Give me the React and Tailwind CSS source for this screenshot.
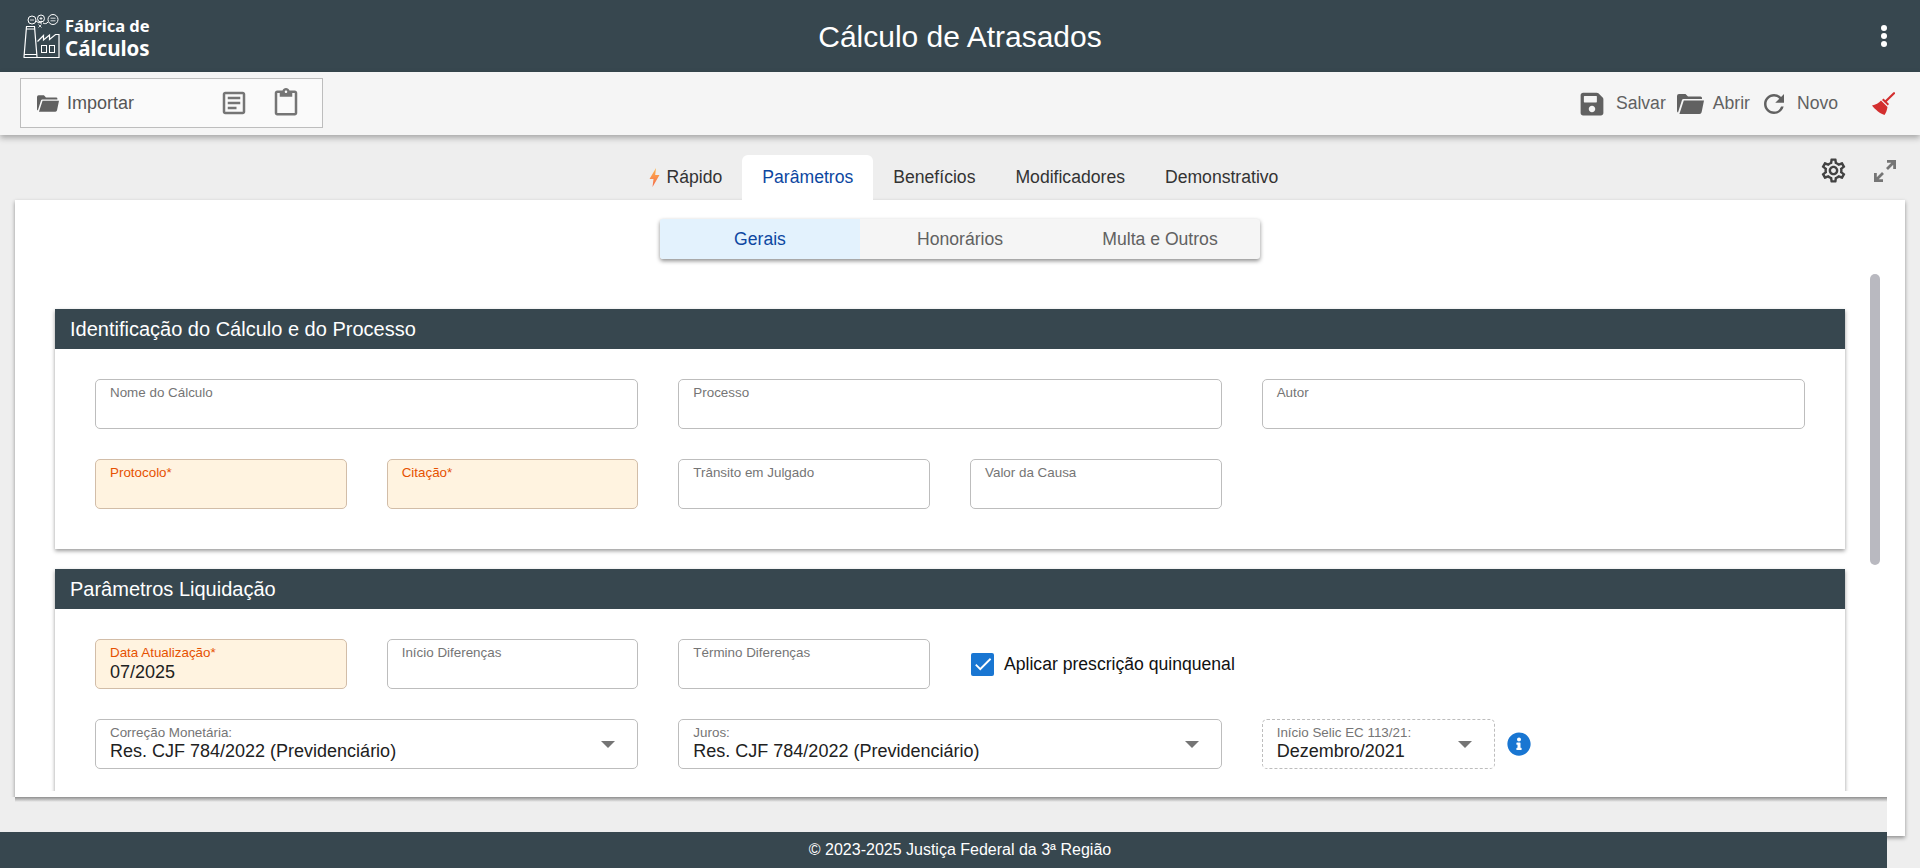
import React from 'react'
import { FaSave, FaInfoCircle } from 'react-icons/fa'
import { MdRefresh, MdOutlineArticle, MdOutlineContentPaste, MdCheck, MdOutlineSettings } from 'react-icons/md'

const FONT = "font-['Liberation_Sans',Arial,sans-serif]"

function Logo() {
  return (
    <div className="flex items-center pl-[23px]">
      <svg viewBox="0 0 37 45" className="w-[37px] h-[45px] text-white" fill="none" stroke="currentColor" strokeWidth="1">
        {/* formula chain */}
        <circle cx="9" cy="6" r="4" />
        <circle cx="18" cy="4.5" r="3.5" />
        <circle cx="30" cy="5.5" r="5" />
        <path d="M13 7l3 2 3 -2M18 8v2M20 9a3.5 3.5 0 0 0 5-1" />
        <path d="M27.5 4.2h5M27.5 6.8h5M16.5 4.5h3M18 3v3M7 6h4" strokeWidth="0.8" />
        <path d="M15.5 10.5l3 3M18.5 10.5l-3 3" strokeWidth="0.8" />
        {/* chimney */}
        <path d="M3 12.5h9M3 15h9" />
        <path d="M3.5 12.5L1 43M11.5 12.5L14 43" strokeWidth="1.2" />
        <path d="M0.5 43.5h36M1 40.5h13" strokeWidth="1.2" />
        {/* factory */}
        <path d="M14.5 27.5l6 -6v4.5l6 -5v4.5l6 -5h3.5v23" strokeWidth="1.2" />
        <rect x="18.5" y="31.5" width="5" height="7" />
        <rect x="26.5" y="31.5" width="5" height="7" />
      </svg>
      <div className="ml-[5px] font-['Noto_Sans',sans-serif] font-bold text-white flex flex-col">
        <span className="text-[16.5px] leading-[22px] mt-[1px]">Fábrica de</span>
        <span className="text-[20.5px] leading-[22px]">Cálculos</span>
      </div>
    </div>
  )
}

function FolderIcon({ className = '' }) {
  return (
    <svg viewBox="0 0 27 20" fill="currentColor" className={className}>
      <path d="M0 2a2 2 0 0 1 2-2h6.5L11 2.5h12.5A1.5 1.5 0 0 1 25 4v1H6.5a1.6 1.6 0 0 0-1.5 1.1L1 18.5A2 2 0 0 1 0 17Z" />
      <path d="M6.8 6.5H27L24.6 18.2a2.2 2.2 0 0 1-2.1 1.8H2.4Z" />
    </svg>
  )
}

function BroomIcon() {
  return (
    <svg viewBox="0 0 23 23" className="w-[23px] h-[23px] text-[#d32f2f]" fill="currentColor">
      <path d="M22 1.2L13.5 9.5" fill="none" stroke="currentColor" strokeWidth="2.2" strokeLinecap="round" />
      <path d="M11.5 6.5L17 12L15.8 13.6L10 8Z" />
      <path d="M9 8.5L15.5 15C15 18 14 21 12.5 23C8 21.5 3 17.5 0 13.5C3.5 13 7 11 9 8.5Z" />
    </svg>
  )
}

function ExpandIcon() {
  return (
    <svg viewBox="0 0 24 24" className="w-[24px] h-[24px] text-[#757575]" fill="none" stroke="currentColor" strokeWidth="2.8">
      <path d="M14 2.4H21.6V10M21 3L14 10" />
      <path d="M10 21.6H2.4V14M3 21L10 14" />
    </svg>
  )
}

function Bolt() {
  return (
    <svg viewBox="0 0 11 19" className="w-[11px] h-[19px] mr-[7px]">
      <defs>
        <linearGradient id="boltFill" x1="0" y1="0" x2="0" y2="1">
          <stop offset="0" stopColor="#ffb74d" />
          <stop offset="1" stopColor="#f4694b" />
        </linearGradient>
      </defs>
      <path d="M7 0L0.5 11H4.5L3.5 19L10.5 7H6.2Z" fill="url(#boltFill)" />
    </svg>
  )
}

function Field({ label, value, required, className = '' }) {
  return (
    <div
      className={`h-[50px] rounded-[5px] border px-[14px] pt-[5px] ${
        required ? 'bg-[#fff3e0] border-[#d2bda8]' : 'bg-white border-[#bdbdbd]'
      } ${className}`}
    >
      <div className={`text-[13.4px] leading-[16px] ${required ? 'text-[#e65100]' : 'text-[#757575]'}`}>{label}</div>
      {value && <div className="text-[18px] leading-[22px] text-[#212121]">{value}</div>}
    </div>
  )
}

function SelectField({ label, value, dashed, className = '' }) {
  return (
    <div
      className={`h-[50px] rounded-[5px] border border-[#bdbdbd] bg-white pl-[14px] pr-[22px] pt-[5px] flex items-center justify-between ${
        dashed ? 'border-dashed' : ''
      } ${className}`}
    >
      <div className="-mt-[5px]">
        <div className="text-[13.4px] leading-[14px] text-[#757575]">{label}</div>
        <div className="text-[18px] leading-[22px] text-[#212121]">{value}</div>
      </div>
      <div className="w-0 h-0 -mt-[5px] border-x-[7px] border-x-transparent border-t-[7px] border-t-[#757575]" />
    </div>
  )
}

function Section({ title, children }) {
  return (
    <section className="w-[1790px] bg-white shadow-[0_2px_4px_rgba(0,0,0,0.4)]">
      <h2 className="h-[40px] bg-[#37474f] pl-[15px] text-[20px] leading-[40px] text-white">{title}</h2>
      <div className="grid grid-cols-6 gap-x-[40px] gap-y-[30px] px-[40px] pt-[30px] pb-[40px]">{children}</div>
    </section>
  )
}

export default function App() {
  return (
    <div className={`relative h-[868px] w-[1920px] overflow-hidden bg-[#eeeeee] ${FONT}`}>
      {/* Header */}
      <header className="relative h-[72px] bg-[#37474f] flex items-center">
        <Logo />
        <h1 className="absolute left-0 right-0 text-center text-[30px] text-white">Cálculo de Atrasados</h1>
        <div className="ml-auto mr-[33px] flex flex-col gap-[2px]">
          <span className="w-[6px] h-[6px] rounded-full bg-white" />
          <span className="w-[6px] h-[6px] rounded-full bg-white" />
          <span className="w-[6px] h-[6px] rounded-full bg-white" />
        </div>
      </header>

      {/* Toolbar */}
      <div className="relative z-10 h-[63px] bg-[#f5f5f5] shadow-[0_3px_6px_rgba(0,0,0,0.3)] flex items-center justify-between pl-[20px] pr-[25px]">
        <div className="self-start mt-[6px] h-[50px] w-[303px] border border-[#bdbdbd] bg-[#fafafa] flex items-center pl-[16px] text-[#616161]">
          <FolderIcon className="w-[22px] h-[17px]" />
          <span className="ml-[8px] text-[18px] text-[#555555]">Importar</span>
          <MdOutlineArticle size={30} className="ml-[85px] text-[#757575]" />
          <MdOutlineContentPaste size={30} className="ml-[22px] text-[#757575]" />
        </div>
        <div className="flex items-center text-[#616161] text-[17.6px]">
          <FaSave size={26} />
          <span className="ml-[11px]">Salvar</span>
          <FolderIcon className="ml-[11px] w-[27px] h-[20px]" />
          <span className="ml-[9px]">Abrir</span>
          <MdRefresh size={30} className="ml-[9px]" />
          <span className="ml-[8px]">Novo</span>
          <span className="ml-[34px]">
            <BroomIcon />
          </span>
        </div>
      </div>

      {/* Tabs */}
      <div className="h-[65px] grid grid-cols-[1fr_auto_1fr] items-end pl-[7px]">
        <div />
        <nav className="flex text-[17.6px] text-[#333333] h-[45px]">
          <div className="px-[20px] flex items-center">
            <Bolt />
            Rápido
          </div>
          <div className="px-[20px] flex items-center bg-white rounded-t-[6px] text-[#0d47a1]">Parâmetros</div>
          <div className="px-[20px] flex items-center">Benefícios</div>
          <div className="px-[20px] flex items-center">Modificadores</div>
          <div className="px-[20px] flex items-center">Demonstrativo</div>
        </nav>
        <div className="flex justify-end items-center gap-[25px] pr-[23px] pb-[15px]">
          <MdOutlineSettings size={29} className="text-[#424242]" />
          <ExpandIcon />
        </div>
      </div>

      {/* Card */}
      <main className="ml-[15px] w-[1890px] h-[636px] bg-white shadow-[0_2px_4px_rgba(0,0,0,0.4)] pt-[19px]">
        <div className="ml-[645px] w-[600px] h-[40px] flex bg-[#f5f5f5] rounded-[3px] shadow-[0_2px_4px_rgba(0,0,0,0.45)] text-[17.6px] text-[#616161]">
          <div className="w-[200px] flex items-center justify-center bg-[#e3f2fd] text-[#0d47a1] rounded-l-[3px]">Gerais</div>
          <div className="w-[200px] flex items-center justify-center">Honorários</div>
          <div className="w-[200px] flex items-center justify-center">Multa e Outros</div>
        </div>

        <div className="mt-[15px] h-[517px] flex">
          <div className="w-[1840px] h-full overflow-hidden pl-[40px] pt-[35px] flex flex-col gap-[20px]">
            <Section title="Identificação do Cálculo e do Processo">
              <Field label="Nome do Cálculo" className="col-span-2" />
              <Field label="Processo" className="col-span-2" />
              <Field label="Autor" className="col-span-2" />
              <Field label="Protocolo*" required />
              <Field label="Citação*" required />
              <Field label="Trânsito em Julgado" />
              <Field label="Valor da Causa" />
            </Section>
            <Section title="Parâmetros Liquidação">
              <Field label="Data Atualização*" value="07/2025" required />
              <Field label="Início Diferenças" />
              <Field label="Término Diferenças" />
              <label className="col-span-3 pl-[1px] flex items-center gap-[10px] text-[17.6px] text-[#111111]">
                <span className="w-[23px] h-[23px] rounded-[2px] bg-[#1976d2] flex items-center justify-center">
                  <MdCheck size={22} className="text-white" />
                </span>
                Aplicar prescrição quinquenal
              </label>
              <SelectField label="Correção Monetária:" value="Res. CJF 784/2022 (Previdenciário)" className="col-span-2" />
              <SelectField label="Juros:" value="Res. CJF 784/2022 (Previdenciário)" className="col-span-2" />
              <div className="col-span-2 flex items-center gap-[12px]">
                <SelectField label="Início Selic EC 113/21:" value="Dezembro/2021" dashed className="w-[233px]" />
                <FaInfoCircle size={24} className="text-[#1976d2]" />
              </div>
            </Section>
          </div>
          <div className="ml-[15px] w-[10px] h-[291px] rounded-full bg-[#b9b9c0]" />
        </div>
      </main>

      {/* Bottom strip lies over the card */}
      <div className="absolute left-0 bottom-0 w-[1887px] h-[71px] flex flex-col justify-between bg-[#eeeeee]">
        <div className="ml-[15px] h-[5px] bg-linear-to-b from-black/40 to-transparent" />
        <footer className="h-[36px] bg-[#37474f] pl-[33px] text-center text-[16px] leading-[36px] text-white">
          © 2023-2025 Justiça Federal da 3ª Região
        </footer>
      </div>
    </div>
  )
}
